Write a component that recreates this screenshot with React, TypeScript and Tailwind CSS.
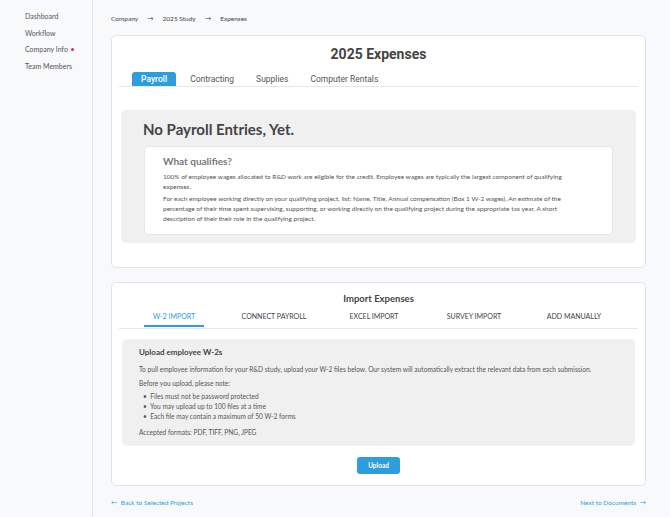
import React from 'react';

const sideItems = ['Dashboard', 'Workflow', 'Company Info', 'Team Members'];
const expenseTabs = ['Payroll', 'Contracting', 'Supplies', 'Computer Rentals'];
const importTabs = ['W-2 IMPORT', 'CONNECT PAYROLL', 'EXCEL IMPORT', 'SURVEY IMPORT', 'ADD MANUALLY'];

const sans = "font-['Lato','Open_Sans',sans-serif]";

const App: React.FC = () => {
  return (
    <div className={`min-h-screen w-[670px] flex bg-[#f8f9fb] text-[#555] ${sans}`}>
      {/* sidebar */}
      <aside className="w-[93px] shrink-0 border-r border-[#e4e6ea] pl-[25px] pt-[8px]">
        {sideItems.map((item) => (
          <div key={item} className="h-[16.5px] flex items-center text-[7px] text-[#555]">
            {item}
            {item === 'Company Info' && <span className="ml-[3px] w-[3.5px] h-[3.5px] rounded-full bg-[#e0283a]" />}
          </div>
        ))}
      </aside>

      <main className="flex-1 pl-[18px] pr-[24px] pt-[13px]">
        <div className="flex items-center gap-[9px] text-[6.5px] text-[#444] h-[11px]">
          <span>Company</span>
          <span>→</span>
          <span>2025 Study</span>
          <span>→</span>
          <span>Expenses</span>
        </div>

        {/* expenses card */}
        <section className="mt-[11px] h-[233px] bg-white border border-[#e2e4e8] rounded-[5px] pt-[9px] px-[7px]">
          <h1 className="text-center text-[14px] font-bold text-[#444] font-['Roboto',sans-serif] leading-[18px]">2025 Expenses</h1>
          <div className="mt-[9px] border-b border-[#e6e6e6] flex items-end pl-[13px] font-['Roboto',sans-serif] text-[8.5px]">
            {expenseTabs.map((t, i) => (
              <div
                key={t}
                className={
                  i === 0
                    ? 'h-[14px] px-[9px] mr-[3px] flex items-center rounded-t-[3px] bg-[#2d9edb] text-white font-medium'
                    : 'h-[14px] px-[11px] flex items-center text-[#555]'
                }
              >
                {t}
              </div>
            ))}
          </div>

          <div className="mt-[23px] mx-[2px] bg-[#f0f0f0] rounded-[5px] pt-[10px] pb-[8px] px-[22px]">
            <h2 className="text-[15px] font-bold text-[#444] leading-[18px]">No Payroll Entries, Yet.</h2>
            <div className="mt-[8px] mx-[1px] bg-white rounded-[4px] border border-[#e6e6e6] pt-[8px] pb-[10px] pl-[18px] pr-[40px]">
              <h3 className="text-[10px] font-bold text-[#777] leading-[13px]">What qualifies?</h3>
              <p className="mt-[4px] text-[6.5px] leading-[10px] text-[#555]">
                100% of employee wages allocated to R&amp;D work are eligible for the credit. Employee wages are typically the largest component of qualifying expenses.
              </p>
              <p className="mt-[2px] text-[6.5px] leading-[10px] text-[#555]">
                For each employee working directly on your qualifying project, list: Name, Title, Annual compensation (Box 1 W-2 wages), An estimate of the percentage of their time spent supervising, supporting, or working directly on the qualifying project during the appropriate tax year, A short description of their their role in the qualifying project.
              </p>
            </div>
          </div>
        </section>

        {/* import card */}
        <section className="mt-[14px] h-[204px] bg-white border border-[#e2e4e8] rounded-[5px] pt-[9px] px-[7px]">
          <h2 className="text-center text-[9.5px] font-bold text-[#444] leading-[13px]">Import Expenses</h2>
          <div className="mt-[3px] border-b border-[#e6e6e6] pl-[5px]">
            <div className="grid grid-cols-5 w-[500px]">
              {importTabs.map((t, i) => (
                <div key={t} className="flex justify-center">
                  <div
                    className={
                      i === 0
                        ? 'px-[9px] h-[17px] flex items-center text-[7px] text-[#2d9edb] border-b-2 border-[#2d9edb] box-content'
                        : 'px-[9px] h-[17px] flex items-center text-[7px] text-[#444] border-b-2 border-transparent box-content'
                    }
                  >
                    {t}
                  </div>
                </div>
              ))}
            </div>
            <div className="h-[1px]" />
          </div>

          <div className="mt-[10px] mx-[3px] bg-[#f0f0f0] rounded-[5px] pt-[8px] pb-[9px] px-[17px] text-[6.6px] text-[#555]">
            <h3 className="text-[8px] font-bold text-[#444] leading-[11px]">Upload employee W-2s</h3>
            <p className="mt-[6px] leading-[10px]">
              To pull employee information for your R&amp;D study, upload your W-2 files below. Our system will automatically extract the relevant data from each submission.
            </p>
            <p className="mt-[4px] leading-[10px]">Before you upload, please note:</p>
            <ul className="mt-[3px] pl-[4px] leading-[10px]">
              <li>•&nbsp;&nbsp;Files must not be password protected</li>
              <li>•&nbsp;&nbsp;You may upload up to 100 files at a time</li>
              <li>•&nbsp;&nbsp;Each file may contain a maximum of 50 W-2 forms</li>
            </ul>
            <p className="mt-[6px] leading-[10px]">Accepted formats: PDF, TIFF, PNG, JPEG</p>
          </div>

          <div className="mt-[11px] flex justify-center">
            <button className="w-[43px] h-[17px] rounded-[3px] bg-[#2d9edb] text-white text-[6.5px] font-bold">Upload</button>
          </div>
        </section>

        <div className="mt-[12px] flex justify-between text-[6.5px] leading-[10px] text-[#2d9edb]">
          <span>←&nbsp;&nbsp;Back to Selected Projects</span>
          <span>Next to Documents&nbsp;&nbsp;→</span>
        </div>
      </main>
    </div>
  );
};

export default App;
